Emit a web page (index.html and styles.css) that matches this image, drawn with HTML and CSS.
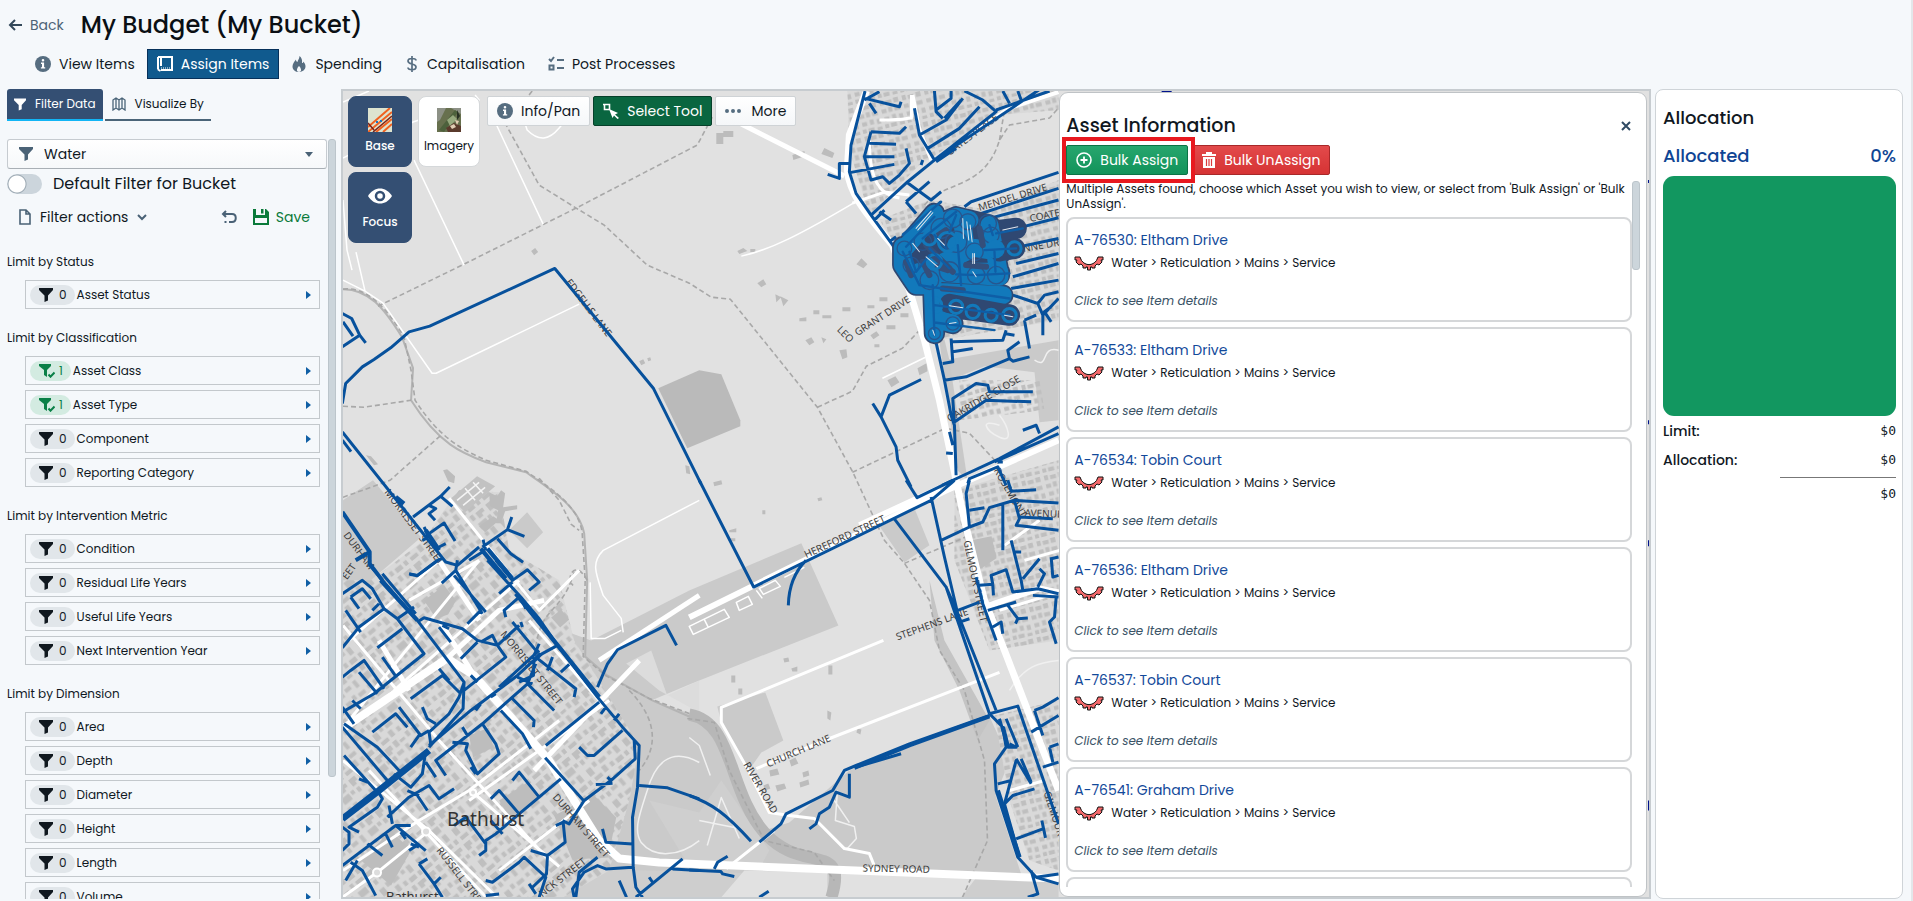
FILE: index.html
```html
<!DOCTYPE html>
<html lang="en">
<head>
    <meta charset="UTF-8">
    <meta name="viewport" content="width=device-width, initial-scale=1.0">
    <title>My Budget (My Bucket)</title>
    <link rel="stylesheet" href="styles.css">
</head>
<body>
    <!-- shared icons -->
    <svg class="sprite" aria-hidden="true">
        <symbol id="i-info" viewBox="0 0 16 16"><circle cx="8" cy="8" r="8" fill="currentColor"/><path d="M8 3a1.3 1.3 0 1 1 0 2.6A1.3 1.3 0 0 1 8 3zM6 6.6h3.1v4.6h1.1v1.4H5.9v-1.4H7V8H6z" fill="#fff"/></symbol>
        <symbol id="i-funnel" viewBox="0 0 14 14"><path d="M0 0h14v2L9 7.500v5L5.500 14V7.500L0 2z" fill="currentColor"/></symbol>
        <symbol id="i-funnel-check" viewBox="0 0 16 14"><path d="M0 0h12v2L8 6v7l-3-2V6L0 2z" fill="currentColor"/><path d="M9.500 10.500l2 2.200 4-4.200" fill="none" stroke="currentColor" stroke-width="2"/></symbol>
        <symbol id="i-arrow" viewBox="0 0 5 8"><path d="M0 0l5 4-5 4z" fill="currentColor"/></symbol>
        <symbol id="i-pipe" viewBox="0 0 30 15"><path d="M1 1h5l1.500 3.500c4 5.500 11 5.500 15 0L24 1h5v3h-2l1 2-3 3-2-1-2 2v2h-3v-1h-1.500v3h-3v-3H12v1H9v-2L7 8 5 9 2 6l1-2H1z" fill="#f4696b" stroke="#111" stroke-width="1"/></symbol>
    </svg>

    <div class="page">
        <header class="title-row">
            <a href="#" class="back">
                <svg width="14" height="12" viewBox="0 0 14 12"><path d="M14 6H2M7 1L2 6l5 5" fill="none" stroke="currentColor" stroke-width="2"/></svg>
                Back
            </a>
            <h1>My Budget (My Bucket)</h1>
        </header>

        <nav class="tabs">
            <a href="#" class="tab"><svg width="16" height="16"><use href="#i-info"/></svg>View Items</a>
            <a href="#" class="tab active"><svg width="16" height="16" viewBox="0 0 16 16"><path d="M1 1h14v13H4M1 1v12.500M1 13.500l2.500 1.500M4 1v9" fill="none" stroke="currentColor" stroke-width="2"/><path d="M4 12h9" stroke="currentColor" stroke-dasharray="1 1"/></svg>Assign Items</a>
            <a href="#" class="tab"><svg width="16" height="16" viewBox="0 0 13 16"><path d="M7 0c0 3-2 4-2 6C3.500 5.500 3.500 4 3.500 3.500 1.500 6 0 8 0 10.500 0 14 3 16 6.500 16S13 13.500 13 10.500c0-2-1-3.500-2-5-.2 1-.8 1.500-1.500 1.500C10 4 9 1.500 7 0z" fill="currentColor"/><path d="M6.500 16c-2.500 0-3-3 0-6 3 3 2.500 6 0 6z" fill="#f5f8fb"/></svg>Spending</a>
            <a href="#" class="tab"><svg width="14" height="16" viewBox="0 0 12 16"><path d="M10 4.500C10 3 8 2.500 6 2.500S2 3.200 2 5s2 2.500 4 3 4 1.200 4 3-2 2.700-4 2.700-4-.7-4-2.200M6 0v16" fill="none" stroke="currentColor" stroke-width="1.700"/></svg>Capitalisation</a>
            <a href="#" class="tab"><svg width="16" height="16" viewBox="0 0 16 16"><path d="M1 3l2 2 3-4M9 4h7M9 12h7" fill="none" stroke="currentColor" stroke-width="2"/><path d="M1.500 9.500h4v4h-4z" fill="none" stroke="currentColor" stroke-width="2"/></svg>Post Processes</a>
        </nav>

        <div class="columns">
            <section class="sidebar">
                <div class="side-tabs">
                    <button type="button" class="side-tab active"><svg width="12" height="13"><use href="#i-funnel"/></svg>Filter Data</button>
                    <button type="button" class="side-tab"><svg width="14" height="14" viewBox="0 0 14 14"><path d="M1 3l3-2 3 2 3-2 3 2v10l-3-2-3 2-3-2-3 2zM4 1v10M7 3v10M10 1v10" fill="none" stroke="currentColor" stroke-width="1.300"/></svg>Visualize By</button>
                </div>
                <div class="side-body">
                    <div class="filters">
                        <div class="select-box">
                            <svg width="14" height="14"><use href="#i-funnel"/></svg>
                            <select aria-label="Filter set"><option>Water</option></select>
                            <svg width="8" height="5" viewBox="0 0 8 5"><path d="M0 0h8L4 5z" fill="currentColor"/></svg>
                        </div>
                        <div class="switch-row">
                            <input type="checkbox" id="defaultFilter" class="switch">
                            <label for="defaultFilter">Default Filter for Bucket</label>
                        </div>
                        <div class="action-row">
                            <button type="button" class="link-btn">
                                <svg width="12" height="16" viewBox="0 0 12 16"><path d="M1 1h6l4 4v10H1zM7 1v4h4" fill="none" stroke="currentColor" stroke-width="1.600"/></svg>
                                <span>Filter actions</span>
                                <svg width="10" height="7" viewBox="0 0 10 7"><path d="M1 1l4 4 4-4" fill="none" stroke="currentColor" stroke-width="2"/></svg>
                            </button>
                            <button type="button" class="link-btn undo" aria-label="Undo"><svg width="16" height="14" viewBox="0 0 16 14"><path d="M5 1L2 4l3 3M2 4h9c5 0 5 8 0 8H8" fill="none" stroke="currentColor" stroke-width="2"/><path d="M3.500 11h2v2h-2z" fill="currentColor"/></svg></button>
                            <button type="button" class="link-btn save"><svg width="16" height="16" viewBox="0 0 16 16"><path d="M0 0h3v6h9V0h1l3 3v13h-2V9H2v7H0z M0 14h16v2H0z M8 0h2.500v4.500H8z" fill="currentColor"/></svg>Save</button>
                        </div>

                        <h3>Limit by Status</h3>
                        <button type="button" class="filter"><span class="pill"><svg width="14" height="14"><use href="#i-funnel"/></svg>0</span>Asset Status<svg class="go" width="5" height="8"><use href="#i-arrow"/></svg></button>

                        <h3>Limit by Classification</h3>
                        <button type="button" class="filter"><span class="pill on"><svg width="16" height="14"><use href="#i-funnel-check"/></svg>1</span>Asset Class<svg class="go" width="5" height="8"><use href="#i-arrow"/></svg></button>
                        <button type="button" class="filter"><span class="pill on"><svg width="16" height="14"><use href="#i-funnel-check"/></svg>1</span>Asset Type<svg class="go" width="5" height="8"><use href="#i-arrow"/></svg></button>
                        <button type="button" class="filter"><span class="pill"><svg width="14" height="14"><use href="#i-funnel"/></svg>0</span>Component<svg class="go" width="5" height="8"><use href="#i-arrow"/></svg></button>
                        <button type="button" class="filter"><span class="pill"><svg width="14" height="14"><use href="#i-funnel"/></svg>0</span>Reporting Category<svg class="go" width="5" height="8"><use href="#i-arrow"/></svg></button>

                        <h3>Limit by Intervention Metric</h3>
                        <button type="button" class="filter"><span class="pill"><svg width="14" height="14"><use href="#i-funnel"/></svg>0</span>Condition<svg class="go" width="5" height="8"><use href="#i-arrow"/></svg></button>
                        <button type="button" class="filter"><span class="pill"><svg width="14" height="14"><use href="#i-funnel"/></svg>0</span>Residual Life Years<svg class="go" width="5" height="8"><use href="#i-arrow"/></svg></button>
                        <button type="button" class="filter"><span class="pill"><svg width="14" height="14"><use href="#i-funnel"/></svg>0</span>Useful Life Years<svg class="go" width="5" height="8"><use href="#i-arrow"/></svg></button>
                        <button type="button" class="filter"><span class="pill"><svg width="14" height="14"><use href="#i-funnel"/></svg>0</span>Next Intervention Year<svg class="go" width="5" height="8"><use href="#i-arrow"/></svg></button>

                        <h3>Limit by Dimension</h3>
                        <button type="button" class="filter"><span class="pill"><svg width="14" height="14"><use href="#i-funnel"/></svg>0</span>Area<svg class="go" width="5" height="8"><use href="#i-arrow"/></svg></button>
                        <button type="button" class="filter"><span class="pill"><svg width="14" height="14"><use href="#i-funnel"/></svg>0</span>Depth<svg class="go" width="5" height="8"><use href="#i-arrow"/></svg></button>
                        <button type="button" class="filter"><span class="pill"><svg width="14" height="14"><use href="#i-funnel"/></svg>0</span>Diameter<svg class="go" width="5" height="8"><use href="#i-arrow"/></svg></button>
                        <button type="button" class="filter"><span class="pill"><svg width="14" height="14"><use href="#i-funnel"/></svg>0</span>Height<svg class="go" width="5" height="8"><use href="#i-arrow"/></svg></button>
                        <button type="button" class="filter"><span class="pill"><svg width="14" height="14"><use href="#i-funnel"/></svg>0</span>Length<svg class="go" width="5" height="8"><use href="#i-arrow"/></svg></button>
                        <button type="button" class="filter"><span class="pill"><svg width="14" height="14"><use href="#i-funnel"/></svg>0</span>Volume<svg class="go" width="5" height="8"><use href="#i-arrow"/></svg></button>
                    </div>
                    <div class="thumb side-thumb"></div>
                </div>
            </section>

            <main class="map">
                <svg class="map-canvas" viewBox="344 91 1305 806" preserveAspectRatio="xMinYMin slice" role="img" aria-label="Map of Bathurst">
                    <defs>
                        <pattern id="houses" width="47" height="41" patternUnits="userSpaceOnUse" patternTransform="rotate(-40)">
                            <path d="M1 2h8v5h-3v3H1zM12 1h5v7h-5zM19 4h6v3h-6zM28 1h4v6h-4zM35 2h9v4h-4v3h-5zM2 13h4v5H2zM9 12h7v4H9zM20 11h4v8h-4zM30 12h10v7H30zM42 12h4v4h-4zM1 24h6v8H1zM10 22h4v5h-4zM17 24h8v4h-8zM29 23h4v4h-4zM36 23h5v8h-5zM3 35h9v4H3zM15 31h5v7h-5zM24 33h4v5h-4zM31 34h8v5h-8zM42 34h4v5h-4z" fill="#bfbfbf"/>
                        </pattern>
                        <pattern id="homes" width="23" height="31" patternUnits="userSpaceOnUse" patternTransform="rotate(-14)">
                            <path d="M1 1h4v5H1zM7 2h6v4H7zM15 1h5v5h-5zM1 10h5v4H1zM8 9h4v5H8zM14 10h6v4h-6zM2 18h5v4H2zM10 17h4v5h-4zM17 18h4v5h-4zM1 25h4v4H1zM7 25h6v4H7zM16 26h5v3h-5z" fill="#bfbfbf"/>
                        </pattern>
                    </defs>
                    <rect x="344" y="91" width="1400" height="900" fill="#e1e1e1"/>

                    <!-- parks and open ground -->
                    <g fill="#cacaca">
                        <path d="M659 388L700 370 722 374 741 420 741 426 688 448z" fill="#bababa"/>
                        <path d="M570 632L592 640 690 590 802 543 839 625 690 684 652 700 700 716 720 735 740 780 765 830 790 822 850 770 990 716 1010 760 996 795 1030 899 344 899 600 899 600 760 560 700z"/>
                        <path d="M878 523L915 508 930 545 905 562zM718 706L766 692 784 740 762 752 748 772 722 722z"/>
                        <path d="M930 580L945 640 990 720 978 740 960 690 935 640z" fill="#c4c4c4"/>
                        <path d="M510 530L528 512 544 532 528 548z"/>
                        <path d="M944 360L1059 340 1059 420 1040 422 1035 372 985 366 950 380z"/>
                        <path d="M933 290L946 385 958 470 968 480 950 360z" fill="#c8c8c8"/>
                    </g>
                    <path d="M627 663L652 650 668 695 700 680 700 712 660 690z" fill="#dcdcdc"/>
                    <path d="M700 812L722 780 770 850 760 868 690 866 650 800z" fill="#cfcfcf"/>
                    <path d="M560 868L1059 880 1059 899 560 899z" fill="#cecece"/>
                    <path d="M834 870L980 873 960 899 834 899zM745 870L828 872 828 899 720 899z" fill="#e1e1e1"/>

                    <!-- built-up blocks -->
                    <g fill="#d9d9d9">
                        <path d="M344 560L372 580 425 540 445 510 460 490 500 492 510 550 560 580 575 640 640 745 630 800 610 870 560 899 344 899z"/>
                        <path d="M848 91L1059 91 1059 110 1000 115 920 165 870 215 850 150z"/>
                        <path d="M880 220L930 200 990 210 1059 180 1059 320 940 340 930 290 900 250z"/>
                        <path d="M955 490L1059 460 1059 640 990 650 955 560z"/>
                        <path d="M995 715L1059 700 1059 870 1030 860 1010 800z"/>
                    </g>
                    <path d="M344 560L372 580 425 540 445 510 460 490 500 492 510 550 560 580 575 640 640 745 630 800 610 870 560 899 344 899z" fill="url(#houses)"/>
                    <path d="M344 500L374 480 422 537 372 580 344 580z" fill="#cacaca"/>
                    <g fill="url(#homes)">
                        <path d="M848 91L1059 91 1059 110 1000 115 920 165 870 215 850 150z"/>
                        <path d="M880 220L930 200 990 210 1059 180 1059 320 940 340 930 290 900 250z"/>
                        <path d="M960 380L1040 380 1045 410 960 420zM955 490L1059 460 1059 640 990 650 955 560z"/>
                        <path d="M995 715L1059 700 1059 870 1030 860 1010 800z"/>
                    </g>
                    <path d="M425 600l20-15 12 15-8 14-12 4zM362 860l30-30 20 20-20 35zM555 815l40-20 22 22-8 40-36 2zM972 540l20-4 5 22-15 10-10-6zM470 735l20-8 4 20-20 10zM500 800l28-18 12 16-28 22zM552 617l10-8 8 10-9 8z" fill="#bdbdbd"/>
                    <g fill="#bcbcbc">
                        <path d="M532 251l4-3 3 4-4 3zM717 133h7v11h-7zM724 131h10v6h-10zM793 155l12-4 1 5-12 4zM825 148l10 5-2 5-11-4zM738 251l6-3 4 3-8 3zM751 249h5v3h-5zM758 283l6-4 3 5-5 3zM776 294l6 3-5 5zM781 296l8 4-5 6z"/>
                        <path d="M814 310h6v4h-6zM823 315h9v3h-9zM868 305h7v3h-7zM880 297h8v4h-8zM800 318l7-1v4h-7zM843 307h8v4h-8zM857 264l5-6 6 6-4 4zM806 340l6-3 3 5-5 3zM822 337l5 2-3 4zM840 350l7-1 1 8-5 2zM871 335l6-4 3 4-6 4zM887 325h9v4h-9zM901 313h8v4h-8zM888 380l8-4 4 6-8 5zM918 368l9-5 1 8-8 4zM875 344h5v3h-5z"/>
                        <path d="M686 465l4 1 1 8-4-1zM640 361l4-2 2 4-4 2zM648 358l3-1 1 3-3 1zM714 482l8-2 1 4-8 2zM730 530l7-2v4h-7zM731 538h5v3h-5zM818 498l4-1 1 3-4 1zM763 510h3v4h-3zM732 675h4v7h-4zM739 688h4v6h-4zM784 658l5-1 1 4-5 1zM792 668l6-2v5h-5zM829 665h4v9h-4zM828 710l4 2-1 8-3-2zM858 728l4 1-1 5-4-2zM770 770l8-2 2 6-9 2zM790 760l6-3 3 6-7 3zM776 785l9-2 2 5-9 3zM803 772l6-2 1 5-6 2zM800 782l9-3 1 5-9 3zM764 785l5-2 2 5-5 2z"/>
                        <path d="M444 470l4-1 8 7-1 7-6-2zM367 455l5 1 7 8-4 1zM480 526l14-10 6 4-14 12zM490 492l8 4 4-6 4 3-2 14 14-2v4l-12 2-4 12h-5l2-13-8-4z"/>
                    </g>
                    <path d="M452 498l26-22 18 10-30 26z" fill="#c2c2c2"/>
                    <path d="M458 500l22-18M464 505l22-18M466 488l10 12M474 482l10 11" stroke="#f4f4f4" stroke-width="1.500"/>

                    <!-- river and tracks -->
                    <g fill="none" stroke="#a6a6a6" stroke-width="2">
                        <path d="M344 289C370 289 385 308 403 337L414 368 412 400C440 444 463 453 487 462L527 472C553 490 580 507 585 533L588 580 586 656 608 675 653 700 690 716" stroke="#b4b4b4"/>
                        <path d="M690 714C735 722 728 790 765 832S850 840 832 897" stroke="#b7b7b7" stroke-width="12"/>
                    </g>
                    <g fill="none" stroke="#a8a8a8" stroke-width="1.600" stroke-dasharray="5 3">
                        <path d="M344 289C368 286 388 308 405 337L412 370 416 400C442 440 465 450 487 460L527 471C550 487 580 505 583 533L586 580 584 656 606 675 650 698 690 713"/>
                        <path d="M533 91L507 125 540 185 577 208 605 225 648 265 690 283 712 297 731 299 818 407 853 471 885 540 905 563 930 600 940 650 965 690 985 760 988 840 962 899"/>
                        <path d="M379 306L463 265 577 208 698 145 714 115M344 406L365 407 412 400M344 497L391 480 443 434M540 478L560 500 572 524 580 530M818 407L853 391 867 366 903 348 925 325M853 472L946 428 970 433 1000 465M905 563L970 535M925 205C945 180 985 190 1000 140L1010 125 1050 118 1059 108M588 580C575 556 566 580 574 585M575 572C560 620 540 600 535 660M630 690C650 710 665 740 640 770M1000 140L1005 110"/>
                        <path d="M688 718L715 722 730 770 765 840 815 852 835 880"/>
                    </g>

                    <!-- roads -->
                    <g fill="none" stroke="#fff" stroke-linejoin="round">
                        <g stroke-width="1.500">
                            <path d="M344 280L366 291 384 303 433 373 437 373 580 304M344 102L370 91M344 158L414 122 480 100 476 95M344 200L348 250 353 270M415 160L465 265M496 122L544 224M520 105L528 130C540 142 550 140 560 128L575 110M357 252L366 291M742 256C770 250 800 235 854 203M883 378L926 357"/>
                            <path d="M700 500L604 550C592 562 596 572 604 595L622 618 624 632M591 582L592 638 606 638 622 630"/>
                            <path d="M690 737L700 745 711 775M708 845L722 797 740 838M700 820L740 828M1010 690C1025 665 1040 662 1059 660M1000 425C980 418 985 430 1000 437S1008 425 1000 415M1035 360C1050 370 1040 345 1059 350M700 762C670 745 655 765 648 790C640 815 634 830 642 842C655 858 680 856 700 840M838 790L836 820 855 826 857 838 848 848M835 800L850 822" stroke="#f0f0f0"/>
                            <path d="M690 626l35-17 5 8-36 17zM737 602l12-6 4 8-13 6zM760 588l16-8 5 6-17 8zM785 577l20-10M705 619l4 8M757 590l6 8"/>
                        </g>
                        <g stroke-width="3">
                            <path d="M884 640L722 707 722 722 748 768 770 812 790 815 815 818 845 848 870 853 876 868M757 768L825 740 1000 672M727 868L775 830M853 203L885 192 910 195"/>
                            <path d="M880 120C910 120 905 118 912 118L912 95M870 140C870 180 880 195 900 198M1040 520L1005 545M1025 560L1060 550M1000 610L1059 592M1010 790L1045 780"/>
                            <path d="M450 498L540 610 580 570M410 600L480 560M350 640L440 560M344 625L440 740M480 560L350 720M395 690L520 580M370 770L490 900M440 740L550 860M530 620L600 700M470 800L610 700M344 870L420 820 470 790 560 720M378 872L430 830 344 760M378 872L340 899M430 830L500 899M474 792L560 866M590 800L500 870"/>
                        </g>
                        <path d="M742 124L845 176" stroke-width="5"/>
                        <path d="M344 728L448 658M448 658L475 675 550 760 600 840 620 858 660 862 1059 878" stroke-width="8"/>
                        <path d="M448 658L500 610 545 600M440 560L480 620M410 690L380 640M475 675L440 620M535 770L640 660" stroke-width="5"/>
                        <path d="M867 91L850 135 848 170C850 195 868 215 893 245L910 290 925 340 940 400 955 472 965 520 985 600 1005 650 1059 790" stroke-width="7"/>
                        <path d="M690 617L945 491 1059 440M990 605L1040 588 1059 592M940 488L860 525" stroke-width="6"/>
                        <path d="M913 95L920 130 932 160M935 160L1010 108 1059 92" stroke-width="4"/>
                        <path d="M600 660L700 595" stroke-width="5"/>
                        <circle cx="474" cy="792" r="3" stroke-width="2" fill="#ddd"/>
                        <circle cx="378" cy="872" r="4" stroke-width="2" fill="#ddd"/>
                        <circle cx="427" cy="831" r="4" stroke-width="2" fill="#ddd"/>
                    </g>

                    <!-- street names -->
                    <g class="street">
                        <text transform="translate(566 282) rotate(53)">EDGELLS LANE</text>
                        <text transform="translate(385 492) rotate(53)">MORRISSET STREET</text>
                        <text transform="translate(344 535) rotate(53)">DURHAM</text>
                        <text transform="translate(348 580) rotate(-55)">EET</text>
                        <text transform="translate(501 634) rotate(51)">MORRISSET STREET</text>
                        <text transform="translate(553 797) rotate(49)">DURHAM STREET</text>
                        <text transform="translate(437 850) rotate(52)">RUSSELL STREET</text>
                        <text transform="translate(543 897) rotate(-38)">NCK STREET</text>
                        <text transform="translate(807 558) rotate(-25)">HEREFORD STREET</text>
                        <text transform="translate(898 640) rotate(-20)">STEPHENS LANE</text>
                        <text transform="translate(769 767) rotate(-23)">CHURCH LANE</text>
                        <text transform="translate(744 764) rotate(60)">RIVER ROAD</text>
                        <text transform="translate(863 871) rotate(1)">SYDNEY ROAD</text>
                        <text transform="translate(837 330) rotate(45)">LEO</text>
                        <text transform="translate(858 336) rotate(-33)">GRANT DRIVE</text>
                        <text transform="translate(950 156) rotate(-37)">OATES PLACE</text>
                        <text transform="translate(980 211) rotate(-17)">MENDEL DRIVE</text>
                        <text transform="translate(1031 222) rotate(-12)">COATES</text>
                        <text transform="translate(1024 252) rotate(-10)">NNE DRIVE</text>
                        <text transform="translate(950 422) rotate(-30)">OAKRIDGE CLOSE</text>
                        <text transform="translate(964 541) rotate(78)">GILMOUR STREET</text>
                        <text transform="translate(994 470) rotate(60)">ROSEMONT</text>
                        <text transform="translate(1025 516) rotate(2)">AVENUE</text>
                        <text transform="translate(1044 792) rotate(72)">GILMOUR STREET</text>
                    </g>
                    <text x="387" y="900" class="city small">Bathurst</text>

                    <!-- water mains, drawn on tiles of three units per pixel -->
                    <g class="pipes">
                        <g transform="translate(340 250) scale(.3333)">
                            <path d="M10 460L20 400 70 350 105 328 155 293 210 245 272 228 647 55 943 415 1085 700M10 190L38 205 62 255 80 278M62 255L10 290M12 215L42 258M10 545L320 935 355 945 420 890M10 570L36 604M222 800L305 738 332 710M305 738L340 768M270 765L290 775 270 790 288 810M255 830L270 860 250 870M270 850L315 818 348 872M300 890L320 880M430 890L505 838 518 800M505 838L556 858M475 865L515 910 552 936M432 868L440 900M390 930L430 905M212 972L235 976 310 920"/>
                            <path d="M10 785L92 905 92 940 130 990M50 930L92 905" stroke-width="12"/>
                            <path d="M170 740L195 760M260 840L300 900M425 895L500 985M445 895L520 985" stroke-width="13"/>
                        </g>
                        <g transform="translate(340 560) scale(.3333)">
                            <path d="M92 0L92 15 235 180 375 365 372 445 270 560M130 40L230 160M235 185L255 172 370 205 415 240 475 255 540 195M300 200L335 245M310 195L330 205M365 295L415 245M425 245L460 225 475 255 500 290 375 390M395 345L415 365M10 100L70 60 100 85 135 145 175 175 255 280 105 400 10 455M135 145L60 200 10 262M20 150L65 215M35 110L60 145M35 110L70 85 95 115M120 130L100 150M175 175L225 140M115 262L190 205M10 350L35 330 75 300 135 385M60 335L115 400M130 290L172 350M40 420L65 445M215 415L310 345 365 400M300 325L330 360M375 365L360 410 330 460 270 515 275 550M250 440L265 475 290 490M180 440L245 525 270 510M100 515L170 460 205 500M215 560L240 525"/>
                            <path d="M355 0L350 30 430 160M345 45L440 155M350 30L308 68M385 190L425 150M210 40L235 45 295 0M445 0L545 110 600 175 655 255 775 410 850 500 900 555 895 680 880 770 882 920 890 980 910 1010M470 0L520 60 565 28 600 65 570 90M480 100L520 65M500 170L495 150 535 115M545 110L560 145M520 185L590 270M550 200L545 185M585 285L600 250M590 290L710 385 705 410M625 330L640 290M665 335L690 312M775 380L805 310 835 268 980 195 1012 255M780 425L620 555M785 460L800 440M825 480L840 460M850 510L765 585 745 585 720 560M885 540L888 595 815 660 735 720 690 790 670 780M815 660L805 650M770 672L820 668M650 795L672 785 678 845 625 885 575 870M625 885L622 940 580 980M735 722L618 592M665 655L600 710 540 760 470 820 440 840 440 870 420 885M600 710L540 635 520 660M540 760L480 690 455 715M455 780L490 820M345 795L380 770 440 850M900 675L985 682 1080 715M790 805L800 845 880 850M880 920L800 925 775 915 735 935 700 985 705 1010M775 890L720 935 710 1010M890 1010L1030 895M1000 925L1080 930M940 965L930 950M840 960L862 1010"/>
                            <path d="M655 255L600 285 535 345 395 450 270 555M590 310L565 370 430 490 290 600 320 645M600 270L480 380M585 290L583 345 540 365M565 370L645 450M535 350L580 370M520 415L585 480 583 500M485 450L550 520 575 565M430 490L470 550 480 580 415 640 380 570 385 550 340 545M410 450L425 430M455 410L470 400M370 500L385 525M410 640L395 620M260 570L250 640 215 680 165 640M260 605L290 650M15 490L115 560 185 635M10 500L145 660M10 440L45 490M15 585L110 690M60 655L85 665M115 690L130 715 115 740 30 800 60 815M10 800L30 815 30 850 10 870M10 915L170 795 215 795M170 795L260 870M215 850L240 860M85 850L130 885M55 900L20 960M35 905L70 930 110 1005M150 735L160 790M145 770L210 710 270 675 300 715 345 685M205 690L240 705M235 705L265 750M210 870L240 850M240 910L265 895M240 910L285 970 310 1010M285 970L305 950M440 960L460 965 540 905 555 890 620 950 600 1010M440 1005L480 1000M570 970L590 1000M185 815L200 835M140 820L160 860"/>
                            <path d="M10 775L120 690 270 570" stroke-width="20"/>
                            <path d="M530 100L660 260 780 410M125 60L235 180M585 300L605 280" stroke-width="13"/>
                        </g>
                        <g transform="translate(690 85) scale(.3333)">
                            <path d="M527 18L485 180 480 260 500 325 545 390 610 480 660 560M527 40L630 65 635 50M525 45L570 20M540 55L560 85M545 140L525 215 545 285 580 275 600 295 630 270 660 235 650 190M545 140L630 145 650 125M540 175L620 178M530 215L615 215M485 262L615 238M480 235L450 235 450 280 415 268M675 70L690 150 735 225 1100 -20M735 225L655 290 545 390M695 240L700 225M650 290L725 345 755 320M650 350L720 290M650 350L680 385M735 18L740 80 760 100M740 75L785 40 785 18M765 100L815 45M690 150L770 105 820 40M715 190L810 130 870 65M735 225L780 190 920 80 880 45 825 18M740 230L800 190M920 75L1080 18M960 55L940 18M995 45L985 18M600 470L620 455M570 380L605 405M555 405L585 375M825 365L845 350 1107 262M845 395L1107 310M900 400L1107 345M920 445L1107 398M920 500L1107 460M980 535L1107 505M970 575L1107 535M965 610L1107 585M970 630L1045 655 1065 630 1107 620M1045 655L1060 690 1060 750M1060 690L1107 640M1005 705L1020 790M1005 705L1040 690M1085 710L1065 680 1085 665M640 450L755 350"/>
                            <path d="M735 750L765 885 785 990 795 1020 800 1170M785 760L790 830 760 835M790 770L940 765 950 735M945 745L975 750M790 800L850 790M765 885L830 875 960 820 955 795 990 770M960 820L970 828 1020 815M795 1015L790 940 860 895 895 900 900 920 1030 920M795 1010L890 945 1025 950M550 955L575 995 620 1085 625 1125 665 1205M575 995L600 930 695 883M770 1103L790 1105M780 1040L790 1080M758 1200L930 1120 1107 1025M915 1130L1107 1045M1000 1035L1040 1020 1050 1045M835 1195L840 1180 925 1145 950 1200M925 1130L940 1130"/>
                        </g>
                        <g transform="translate(690 480) scale(.3333)">
                            <path d="M30 0L193 320 725 60 795 0M650 0L683 52 790 0M350 240C310 280 298 330 297 375M612 112L770 320 805 400M725 50L765 230 805 400 920 690M770 320L900 700M755 180L840 140 830 40 840 0M840 90L885 82M840 140L880 125 900 82 975 60 1107 68M940 70L940 210M955 0L965 33 1040 28M975 60L990 115 980 135 1107 150M990 110L1090 115M965 180L995 300 1000 330M975 215L995 215M1000 295L1050 235M1045 320L1065 280 1050 265M860 290L880 370 920 480M870 315L910 312 912 345M910 312L905 285 950 268 970 335 1045 325 1107 340M1030 345L1107 350M895 390L980 365M955 375L985 415 1015 413M985 415L978 430M1085 230L1090 290 1107 285M805 390L870 365M810 425L840 415M910 440L935 425 940 460M1100 350L1095 410 1080 425 1100 490M1107 230L1085 235"/>
                            <path d="M900 700L985 677 1107 1030M900 700L940 740 950 800 915 850 920 930 985 1130 1040 1190 1107 1180M930 715L955 800 980 800 960 790M950 715L985 800M1025 755L1107 705M1035 690L1060 765M1035 690L1060 680 1107 652M1060 860L1107 845M1080 800L1107 790M1080 800L1090 845M980 835L1025 910M980 840L945 970 990 1130M995 835L1025 905M925 910L965 900M945 970L970 945 1035 925M980 1075L1060 1045M1057 1020L1068 1072M1040 1190L1107 1210M1025 1170L1045 1240 1015 1250"/>
                            <path d="M900 705L660 790 500 855 465 870 430 930 290 1000 275 1030 210 1085M480 880L480 950 440 935 420 980 390 1000 380 1030 360 1045M635 820L500 860M0 945C70 970 110 1000 185 1082M0 1168L95 1173 100 1180 135 1188M75 1165L85 1145 115 1127M210 1250L238 1232"/>
                            <path d="M495 862L660 795 900 708" stroke-width="12"/>
                            <path d="M925 930L990 1130M940 740L955 800" stroke-width="13"/>
                        </g>
                    </g>
                    <text x="448" y="825" class="city">Bathurst</text>

                    <!-- selected assets -->
                    <g transform="translate(690 85) scale(.3333)" fill="none" stroke-linecap="round" stroke-linejoin="round">
                        <path d="M650 485L735 385M640 485L640 540 680 600 730 600 735 745M735 700L790 715M740 660L960 690M740 620L940 630M690 560L930 560M670 500L940 500M700 450L900 450M740 420L800 395 840 405 900 420M900 440L980 430M900 500L975 490M690 520L780 600M800 400L860 580M900 420L930 570" stroke="#2f4872" stroke-width="64"/>
                        <path d="M650 485L735 385M640 485L640 540 680 600 730 600 735 745M740 620L940 630M690 560L930 560M740 420L800 395 840 405M700 560L930 575M800 480L930 500M700 560L830 500 820 420M900 420L930 570M735 700L790 715" stroke="#1279bb" stroke-width="54"/>
                        <path d="M780 655L960 688M930 500L975 490" stroke="#2f4872" stroke-width="58"/>
                        <g stroke="#27568f" stroke-width="4">
                            <circle cx="645" cy="490" r="22"/><circle cx="700" cy="470" r="26"/><circle cx="755" cy="430" r="30"/><circle cx="790" cy="400" r="28"/><circle cx="835" cy="410" r="24"/><circle cx="895" cy="415" r="26"/><circle cx="855" cy="500" r="26"/><circle cx="800" cy="470" r="32"/><circle cx="905" cy="450" r="24"/><circle cx="720" cy="585" r="28"/><circle cx="665" cy="540" r="24"/><circle cx="780" cy="560" r="30"/><circle cx="860" cy="570" r="26"/><circle cx="920" cy="570" r="26"/><circle cx="735" cy="745" r="18"/><circle cx="790" cy="715" r="20"/>
                        </g>
                        <path d="M710 480l70 70M730 510l60 50M740 455l30-20M745 545l30 10M870 430l10 50M830 540l60 5M700 530l20 40M650 530l15 40M760 610l60 5" stroke="#344f7b" stroke-width="18"/>
                        <g stroke="#1279bb" stroke-width="9">
                            <circle cx="735" cy="660" r="22"/><circle cx="800" cy="665" r="20"/><circle cx="850" cy="680" r="20"/><circle cx="905" cy="690" r="18"/><circle cx="960" cy="690" r="20"/><circle cx="775" cy="470" r="28"/><circle cx="720" cy="460" r="20"/><circle cx="975" cy="490" r="20"/><circle cx="735" cy="530" r="22"/>
                        </g>
                        <circle cx="918" cy="492" r="28" fill="#1279bb"/>
                        <g stroke="#0f5ea6" stroke-width="7">
                            <path d="M640 450L755 350M650 485L735 395M640 500L690 600 960 640M660 500L680 560 720 510M700 460L800 380M780 440L800 390M805 480L815 600M860 570L800 568M860 570L960 565M730 600L735 750M735 660L960 690M735 712L915 735M900 420L910 450M885 495L980 490M915 500L918 560M920 445L1000 430M735 450L770 490M720 490L780 550"/>
                        </g>
                        <path d="M680 430L725 378M685 435L730 383M820 400L822 460M832 410L838 465M842 420L848 470M855 505L855 535M850 505L850 535M940 435L985 425M745 460L765 480M710 515L745 545M780 662L820 668M780 715L800 712M860 575L850 560M730 735L735 750M945 690L970 695M670 475L690 500" stroke="#dfe6ee" stroke-width="3"/>
                    </g>
                    <path d="M1162 92h10M1649 180v3M1649 420v4M1649 540v6M1649 800v10" stroke="#00138c" stroke-width="2"/>
                </svg>

                <div class="map-tools">
                    <div class="layer-grid">
                        <button type="button" class="layer dark"><svg width="24" height="24" viewBox="0 0 24 24"><path d="M0 0h24v24H0z" fill="#dde3cf"/><path d="M0 19L22 0M0 24L24 4M8 24L24 11M15 24l9-8" fill="none" stroke="#f0601f" stroke-width="2"/><path d="M5 24L24 8M0 15l6 7" stroke="#7d2418" stroke-width="1.500"/><path d="M8 14h2M12 13h2" stroke="#1c75c0" stroke-width="2"/></svg>Base</button>
                        <button type="button" class="layer"><svg width="24" height="24" viewBox="0 0 24 24"><path d="M0 0h24v24H0z" fill="#67704e"/><path d="M0 0h9L3 12 0 14zM14 0l10 0v6z" fill="#8d9186"/><path d="M2 22L18 2l3 2L7 24z" fill="#4d613c"/><path d="M10 12l6-5 4 4-7 7z" fill="#96a97e"/><path d="M9 20l8-5 7 3v6H11z" fill="#5a3a2c"/><path d="M13 18l4-2 2 3-4 2zM18 12l4 1-2 4z" fill="#e1cdb4"/><path d="M20 2l3 6-3 4z" fill="#262f22"/></svg>Imagery</button>
                        <button type="button" class="layer dark"><svg width="24" height="24" viewBox="0 0 24 24"><path d="M0 12C6 2 18 2 24 12 18 22 6 22 0 12z" fill="#fff"/><circle cx="12" cy="12" r="4" fill="#fff" stroke="#344f73" stroke-width="2.500"/></svg>Focus</button>
                    </div>
                    <div class="mode-bar">
                        <button type="button" class="mode"><svg width="16" height="16"><use href="#i-info"/></svg>Info/Pan</button>
                        <button type="button" class="mode active"><svg width="16" height="16" viewBox="0 0 16 16"><path d="M1.500 1.500h5v5h-5zM0 1.500h2" fill="none" stroke="currentColor" stroke-width="1.600"/><path d="M6 6l9 4-3 1.500 4 3.500-1.500 1-3.500-3.500L9.500 15z" fill="currentColor"/></svg>Select Tool</button>
                        <button type="button" class="mode"><svg width="18" height="4" viewBox="0 0 18 4"><path d="M2 2h0M8 2h0M14 2h0" stroke="currentColor" stroke-width="4" stroke-linecap="round"/></svg>More</button>
                    </div>
                </div>

                <section class="panel">
                    <div class="panel-head">
                        <h2>Asset Information</h2>
                        <button type="button" class="close" aria-label="Close"><svg width="10" height="10" viewBox="0 0 10 10"><path d="M1 1l8 8M9 1L1 9" stroke="currentColor" stroke-width="2"/></svg></button>
                    </div>
                    <div class="bulk">
                        <span class="marked"><button type="button" class="bulk-btn assign"><svg width="16" height="16" viewBox="0 0 16 16"><circle cx="8" cy="8" r="7" fill="none" stroke="#fff" stroke-width="1.600"/><path d="M8 4.500v7M4.500 8h7" stroke="#fff" stroke-width="1.800"/></svg>Bulk Assign</button></span>
                        <button type="button" class="bulk-btn unassign"><svg width="14" height="16" viewBox="0 0 14 16"><path d="M4 0h6v2h4v2H0V2h4zM1 5h12v11H1z" fill="#fff"/><path d="M4.500 7v7M7 7v7M9.500 7v7" stroke="#dc3a3c" stroke-width="1.200"/></svg>Bulk UnAssign</button>
                    </div>
                    <div class="panel-body">
                        <div class="results">
                            <p>Multiple Assets found, choose which Asset you wish to view, or select from 'Bulk Assign' or 'Bulk UnAssign'.</p>
                            <a href="#" class="card"><strong>A-76530: Eltham Drive</strong><span class="path"><svg width="30" height="15"><use href="#i-pipe"/></svg>Water &gt; Reticulation &gt; Mains &gt; Service</span><em>Click to see Item details</em></a>
                            <a href="#" class="card"><strong>A-76533: Eltham Drive</strong><span class="path"><svg width="30" height="15"><use href="#i-pipe"/></svg>Water &gt; Reticulation &gt; Mains &gt; Service</span><em>Click to see Item details</em></a>
                            <a href="#" class="card"><strong>A-76534: Tobin Court</strong><span class="path"><svg width="30" height="15"><use href="#i-pipe"/></svg>Water &gt; Reticulation &gt; Mains &gt; Service</span><em>Click to see Item details</em></a>
                            <a href="#" class="card"><strong>A-76536: Eltham Drive</strong><span class="path"><svg width="30" height="15"><use href="#i-pipe"/></svg>Water &gt; Reticulation &gt; Mains &gt; Service</span><em>Click to see Item details</em></a>
                            <a href="#" class="card"><strong>A-76537: Tobin Court</strong><span class="path"><svg width="30" height="15"><use href="#i-pipe"/></svg>Water &gt; Reticulation &gt; Mains &gt; Service</span><em>Click to see Item details</em></a>
                            <a href="#" class="card"><strong>A-76541: Graham Drive</strong><span class="path"><svg width="30" height="15"><use href="#i-pipe"/></svg>Water &gt; Reticulation &gt; Mains &gt; Service</span><em>Click to see Item details</em></a>
                            <div class="card"></div>
                        </div>
                        <div class="thumb panel-thumb"></div>
                    </div>
                </section>
            </main>

            <aside class="allocation">
                <h2>Allocation</h2>
                <div class="allocated"><span>Allocated</span><span>0%</span></div>
                <div class="gauge"></div>
                <dl>
                    <div><dt>Limit:</dt><dd>$0</dd></div>
                    <div><dt>Allocation:</dt><dd>$0</dd></div>
                    <div class="total"><dd>$0</dd></div>
                </dl>
            </aside>
        </div>
    </div>
</body>
</html>
```

FILE: styles.css
```css
* {
    margin: 0;
    padding: 0;
    box-sizing: border-box;
}

body {
    font-family: Poppins, Inter, "Noto Sans", sans-serif;
    font-size: 14px;
    line-height: 20px;
    background-color: #f5f8fb;
    color: #10181f;
}

button, select {
    font: inherit;
    color: inherit;
    cursor: pointer;
}

a {
    color: inherit;
    text-decoration: none;
}

svg {
    flex: none;
}

.sprite {
    position: absolute;
    width: 0;
    height: 0;
}

.page {
    height: 100vh;
    display: flex;
    flex-direction: column;
    overflow: hidden;
    border-right: 2px solid #e3e7ea;
}

/* Header */
.title-row {
    height: 49px;
    padding-left: 8px;
    display: flex;
    align-items: center;
    gap: 17px;
}

.back {
    display: flex;
    align-items: center;
    gap: 8px;
    color: #4d6377;
}

.back svg {
    color: #33485a;
}

h1 {
    font-size: 24px;
    line-height: 30px;
    font-weight: 500;
    color: #0a0f14;
}

.tabs {
    display: flex;
    gap: 1px;
    padding-left: 24px;
    margin-bottom: 10px;
}

.tab {
    height: 30px;
    padding: 0 11px;
    display: flex;
    align-items: center;
    gap: 8px;
}

.tab svg {
    color: #566d80;
}

.tab.active {
    background-color: #105a8e;
    color: #fff;
    border: 1px solid #06305a;
    padding: 0 9px;
}

.tab.active svg {
    color: #fff;
}

/* Columns */
.columns {
    flex: 1;
    min-height: 0;
    display: flex;
    padding: 0 8px 2px 7px;
}

.sidebar {
    width: 329px;
    flex: none;
    margin-right: 5px;
    display: flex;
    flex-direction: column;
}

.side-tabs {
    display: flex;
    gap: 2px;
    margin-bottom: 18px;
}

.side-tab {
    height: 32px;
    padding: 0 7px;
    display: flex;
    align-items: center;
    gap: 9px;
    font-size: 12px;
    background: none;
    border: none;
    border-bottom: 2px solid #4a6478;
}

.side-tab svg {
    color: #4a6478;
}

.side-tab.active {
    background-color: #344f73;
    color: #fff;
    border-color: #12b5f5;
    border-radius: 3px 3px 0 0;
}

.side-tab.active svg {
    color: #fff;
}

.side-body {
    flex: 1;
    min-height: 0;
    display: flex;
    gap: 1px;
    overflow: hidden;
}

.filters {
    flex: 1;
}

.thumb {
    width: 8px;
    flex: none;
    border-radius: 3px;
    background-color: #ccd5db;
    border: 1px solid #bcc5cb;
}

.side-thumb {
    height: 84%;
}

.select-box {
    height: 30px;
    padding: 0 13px 0 11px;
    display: flex;
    align-items: center;
    gap: 11px;
    background: linear-gradient(#fff, #f6f8fa);
    border: 1px solid #c6cbd0;
    border-bottom-color: #a9afb5;
    border-radius: 3px;
    color: #4a6276;
}

.select-box select {
    flex: 1;
    appearance: none;
    background: none;
    border: none;
    color: #10181f;
    outline: none;
}

.switch-row {
    margin-top: 5px;
    display: flex;
    align-items: center;
    gap: 11px;
    font-size: 16px;
}

.switch {
    appearance: none;
    width: 35px;
    height: 20px;
    border-radius: 10px;
    background: radial-gradient(circle at 10px 10px, #fff 8px, #9aa7b1 9px, #ccd5dc 10px);
}

.action-row {
    margin: 12px 17px 10px 12px;
    height: 22px;
    display: flex;
    align-items: center;
}

.link-btn {
    display: flex;
    align-items: center;
    gap: 9px;
    background: none;
    border: none;
}

.link-btn svg {
    color: #4a6276;
}

.undo {
    margin-left: auto;
    margin-right: 16px;
}

.save, .save svg {
    color: #0a7a3a;
}

.save {
    gap: 7px;
}

h3 {
    padding: 14px 0 8px;
    font-size: 12px;
    line-height: 20px;
    font-weight: 400;
}

.filter {
    width: calc(100% - 25px);
    height: 29px;
    margin: 0 7px 5px 18px;
    padding: 0 8px 0 4px;
    display: flex;
    align-items: center;
    gap: 2px;
    font-size: 12px;
    text-align: left;
    background: none;
    border: 1px solid #c3c8cc;
}

.pill {
    height: 20px;
    padding: 0 8px 0 9px;
    border-radius: 10px;
    background-color: #e1e6ea;
    display: flex;
    align-items: center;
    gap: 6px;
}

.pill.on {
    background-color: #d3ebe1;
    color: #0a8047;
    gap: 4px;
}

.go {
    margin-left: auto;
    color: #105fa5;
}

/* Map */
.map {
    flex: 1;
    position: relative;
    border: 2px solid #c7ccd0;
    overflow: hidden;
    display: flex;
    justify-content: space-between;
    background-color: #e1e1e1;
}

.map-canvas {
    position: absolute;
    top: 0;
    left: 0;
    width: 100%;
    height: 100%;
}

.pipes {
    fill: none;
    stroke: #07519c;
    stroke-width: 9;
    stroke-linejoin: round;
}

.street {
    font-family: "Noto Sans", sans-serif;
    font-size: 10px;
    fill: #3c3c3c;
}

.city {
    font-family: "Noto Sans", sans-serif;
    font-size: 19px;
    fill: #333;
}

.city.small {
    font-size: 13px;
}

.map-tools {
    position: relative;
    display: flex;
    gap: 7px;
    padding: 5px 0 0 5px;
    align-items: flex-start;
}

.layer-grid {
    display: grid;
    grid-template-columns: 64px 62px;
    gap: 5px 6px;
}

.layer {
    height: 71px;
    display: flex;
    flex-direction: column;
    align-items: center;
    justify-content: center;
    gap: 4px;
    font-size: 12px;
    background-color: #fff;
    border: 1px solid #d5d8da;
    border-radius: 8px;
}

.layer.dark {
    background-color: #344f73;
    border-color: #344f73;
    color: #fff;
    font-weight: 500;
}

.mode-bar {
    display: flex;
    gap: 3px;
}

.mode {
    height: 30px;
    padding: 0 9px;
    display: flex;
    align-items: center;
    gap: 8px;
    background: linear-gradient(#fff, #f5f7f9);
    border: 1px solid #cfd3d6;
    border-radius: 2px;
}

.mode svg {
    color: #566d80;
}

.mode.active {
    background: #0a6640;
    border-color: #06402a;
    color: #fff;
}

.mode.active svg {
    color: #fff;
}

/* Asset panel */
.panel {
    position: relative;
    width: 45%;
    margin: 1px 2px 0 0;
    padding: 21px 6px 9px 6px;
    display: flex;
    flex-direction: column;
    background-color: #fff;
    border: 1px solid #bfc3c6;
    border-radius: 9px;
}

.panel-head {
    display: flex;
    justify-content: space-between;
    align-items: center;
    padding-right: 5px;
}

h2 {
    font-size: 18px;
    line-height: 24px;
    font-weight: 500;
}

.panel h2 {
    font-size: 19px;
}

.close {
    display: flex;
    padding: 4px;
    background: none;
    border: none;
    color: #2f4a63;
}

.bulk {
    display: flex;
    gap: 4px;
    margin-top: 7px;
    margin-bottom: 6px;
}

.marked {
    position: relative;
}

.marked::after {
    content: "";
    position: absolute;
    inset: -8px -7px -8px -4px;
    border: 4px solid #e8191f;
    z-index: 1;
}

.bulk-btn {
    height: 30px;
    padding: 0 9px;
    display: flex;
    align-items: center;
    gap: 8px;
    color: #fff;
    border-radius: 2px;
}

.assign {
    background: linear-gradient(#27a66e, #12935a);
    border: 1px solid #0c7345;
}

.unassign {
    background: linear-gradient(#e24a4b, #d63334);
    border: 1px solid #a82829;
}

.panel-body {
    flex: 1;
    min-height: 0;
    display: flex;
    overflow: hidden;
}

.results {
    flex: 1;
}

.results p {
    font-size: 12px;
    line-height: 15px;
    margin-bottom: 6px;
}

.card {
    height: 105px;
    margin-bottom: 5px;
    padding: 11px 6px;
    display: flex;
    flex-direction: column;
    border: 2px solid #d5d7d9;
    border-radius: 8px;
}

.card strong {
    font-weight: 400;
    color: #12499a;
}

.path {
    display: flex;
    align-items: center;
    gap: 7px;
    margin-top: 3px;
    font-size: 12px;
}

.card em {
    margin-top: 18px;
    font-size: 12px;
    color: #3a5366;
}

.panel-thumb {
    height: 89px;
}

/* Allocation */
.allocation {
    width: 248px;
    flex: none;
    margin-left: 4px;
    padding: 16px 6px 16px 7px;
    background-color: #fff;
    border: 1px solid #cfd4d8;
    border-radius: 8px;
}

.allocated {
    display: flex;
    justify-content: space-between;
    margin: 14px 0 8px;
    font-size: 18px;
    line-height: 24px;
    font-weight: 500;
    color: #0f4594;
}

.gauge {
    height: 240px;
    border-radius: 11px;
    background-color: #129760;
}

dl {
    padding-top: 5px;
}

dl div {
    display: flex;
    justify-content: space-between;
    align-items: center;
    margin-bottom: 9px;
}

dt {
    font-weight: 500;
}

dd {
    font-family: "DejaVu Sans Mono", monospace;
    font-size: 13px;
}

dl .total {
    width: 50%;
    margin: -2px 0 0 auto;
    padding-top: 6px;
    justify-content: flex-end;
    border-top: 1px solid #777;
}
```
